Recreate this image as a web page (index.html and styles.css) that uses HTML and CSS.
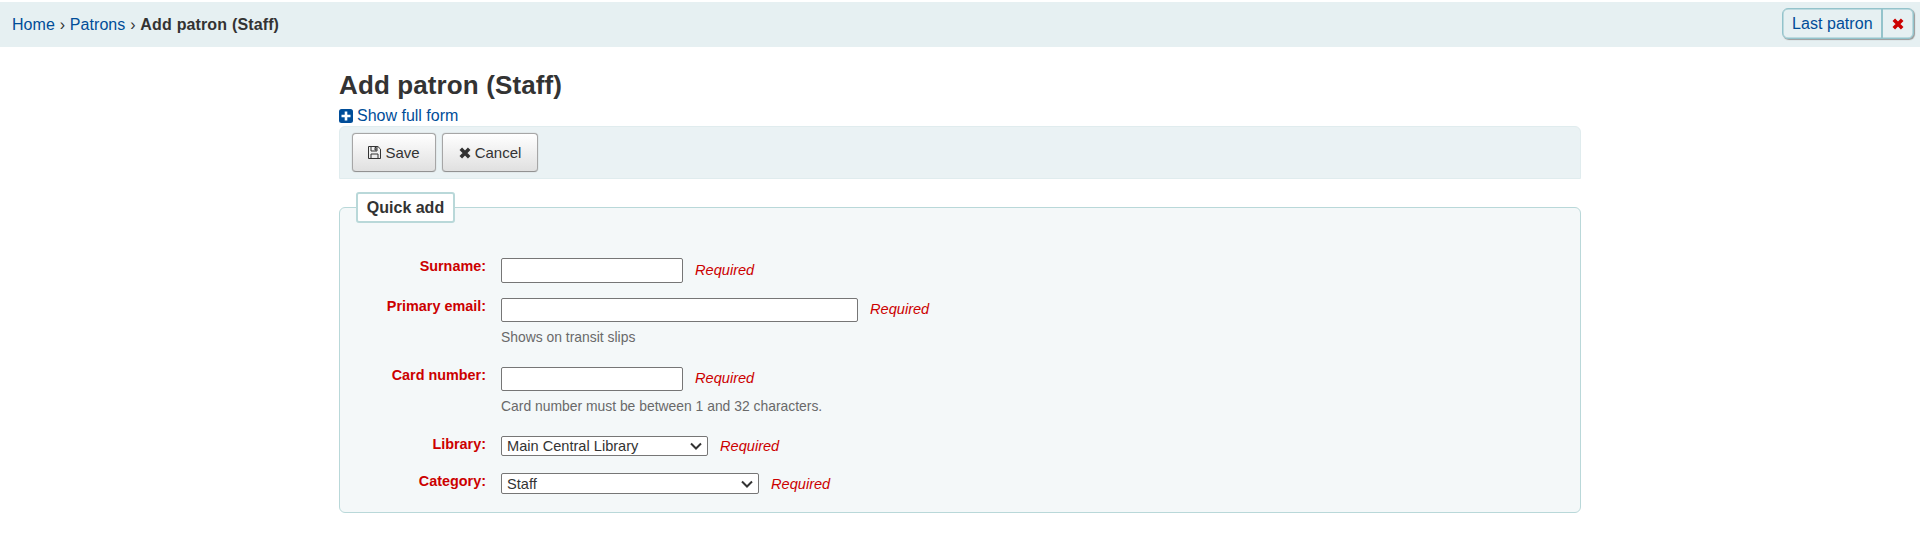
FILE: index.html
```html
<!DOCTYPE html>
<html lang="en">
<head>
<meta charset="utf-8">
<title>Add patron (Staff)</title>
<link rel="stylesheet" href="styles.css">
</head>
<body>
<header class="topbar">
  <nav class="crumbs"><a href="#">Home</a> › <a href="#">Patrons</a> › <b>Add patron (Staff)</b></nav>
  <div class="last"><a class="last-link" href="#">Last patron</a><a class="last-close" href="#"><svg class="x" viewBox="0 0 12 12"><path d="M1.800 1.800 10.200 10.200M10.200 1.800 1.800 10.200"/></svg></a></div>
</header>
<main class="main">
  <h1 class="title">Add patron (Staff)</h1>
  <a class="toggle" href="#"><svg class="plus" viewBox="0 0 14 14"><rect width="14" height="14" rx="2.5"/><path d="M7 2.5v9M2.5 7h9"/></svg>Show full form</a>
  <div class="toolbar">
    <button class="btn save"><svg class="floppy" viewBox="0 0 13 13"><path d="M.5.5h9.4l2.6 2.6v9.4H.5zM3 12.5V8h7v4.500M3 .5v4.500h6v-4.500M7 1.500h1v2.500h-1z"/></svg>Save</button>
    <button class="btn cancel"><svg class="x" viewBox="0 0 12 12"><path d="M1.800 1.800 10.200 10.200M10.200 1.800 1.800 10.200"/></svg>Cancel</button>
  </div>
  <section class="panel">
    <h2 class="legend">Quick add</h2>
    <div class="rows">
      <div class="row surname"><label class="label">Surname:</label><div class="field"><div class="line"><input class="input" type="text"><span class="req">Required</span></div></div></div>
      <div class="row email"><label class="label">Primary email:</label><div class="field"><div class="line"><input class="input wide" type="text"><span class="req">Required</span></div><div class="hint">Shows on transit slips</div></div></div>
      <div class="row card"><label class="label">Card number:</label><div class="field"><div class="line"><input class="input" type="text"><span class="req">Required</span></div><div class="hint">Card number must be between 1 and 32 characters.</div></div></div>
      <div class="row library"><label class="label">Library:</label><div class="field"><div class="line"><div class="select">Main Central Library<svg class="chev" viewBox="0 0 12 8"><path d="m1 1.500 5 5 5-5"/></svg></div><span class="req">Required</span></div></div></div>
      <div class="row category"><label class="label">Category:</label><div class="field"><div class="line"><div class="select long">Staff<svg class="chev" viewBox="0 0 12 8"><path d="m1 1.500 5 5 5-5"/></svg></div><span class="req">Required</span></div></div></div>
    </div>
  </section>
</main>
</body>
</html>
```
FILE: styles.css
```css
* { box-sizing: border-box; }
body { margin: 0; padding-top: 2px; background: #fff; color: #333; font: 16px/20px "Liberation Sans", Arial, sans-serif; }
a { color: #004d99; text-decoration: none; }
.topbar { display: flex; justify-content: space-between; height: 45px; padding: 6px 6px 0 12px; background: #e6f0f2; }
.crumbs { padding-top: 7px; white-space: nowrap; letter-spacing: .05px; word-spacing: .3px; }
.crumbs b { color: #333; letter-spacing: .12px; }
.last { display: flex; width: 132px; height: 31px; border: 1px solid #93c3cb; border-radius: 6px; box-shadow: 1px 1px 1px #999, inset 0 0 0 .5px #93c3cb; background: #e6f0f2; }
.last-link { width: 100px; padding: 5px 0 0 9px; border-right: 2px solid #93c3cb; line-height: 20px; white-space: nowrap; letter-spacing: .05px; }
.last-close { display: flex; flex: 1; align-items: center; justify-content: center; color: #c00; }
.x { width: 12px; height: 12px; fill: none; stroke: currentColor; stroke-width: 3.6; }
.main { width: 1242px; margin: 0 auto; padding-top: 22px; }
.title { margin: 0; font-size: 26px; line-height: 32px; letter-spacing: .12px; }
.toggle { display: flex; align-items: center; height: 25px; padding-top: 5px; }
.plus { width: 14px; height: 14px; margin: 0 4px 0 0; fill: #004d99; stroke: #fff; }
.plus rect { stroke: none; }
.plus path { stroke-width: 2.6; }
.toolbar { display: flex; gap: 6px; height: 53px; padding: 6px 12px; border: 1px solid #e0ecee; border-radius: 6px 6px 0 0; background: #eaf2f4; }
.btn { display: flex; align-items: center; justify-content: center; height: 39px; padding: 0; border: 1px solid #a6a6a6; border-bottom-color: #929292; border-radius: 4px; background: linear-gradient(#fff, #e0e0e0); color: #333; font: 15px/20px "Liberation Sans", Arial, sans-serif; box-shadow: 0 0 1px #999; }
.save { width: 84px; }
.cancel { width: 96px; }
.floppy { width: 13px; height: 13px; margin-right: 4px; fill: none; stroke: #333; }
.btn .x { margin-right: 4px; }
.panel { height: 306px; margin-top: 28px; padding-left: 16px; border: 1px solid #b9d8d9; border-radius: 6px; background: #f4f8f9; }
.legend { width: 99px; height: 31px; margin: -16px 0 0; border: 2px solid #b9d8d9; border-radius: 3px; background: #fff; font-size: 16px; line-height: 27px; text-align: center; }
.rows { padding-top: 35px; }
.row { display: flex; gap: 15px; }
.surname { height: 40px; }
.email, .card { height: 69px; }
.library { height: 37px; }
.label { width: 130px; color: #c00; font-size: 14.4px; font-weight: bold; line-height: 16px; text-align: right; }
.line { display: flex; gap: 12px; align-items: center; }
.input { width: 182px; height: 24px; border: 1px solid #767676; border-radius: 2px; background: #fff; }
.surname .input { height: 25px; }
.wide { width: 357px; }
.req { color: #c00; font-size: 14.6px; font-style: italic; line-height: 20px; }
.input + .req { padding-bottom: 2px; }
.hint { margin-top: 6px; color: #696969; font-size: 13.9px; line-height: 18px; }
.select { display: flex; align-items: center; justify-content: space-between; width: 207px; height: 20px; padding: 0 5px; border: 1px solid #767676; border-radius: 2px; background: #fff; font-size: 14.6px; line-height: 18px; }
.long { width: 258px; height: 21px; }
.chev { width: 12px; height: 8px; fill: none; stroke: #333; stroke-width: 2; }
```
